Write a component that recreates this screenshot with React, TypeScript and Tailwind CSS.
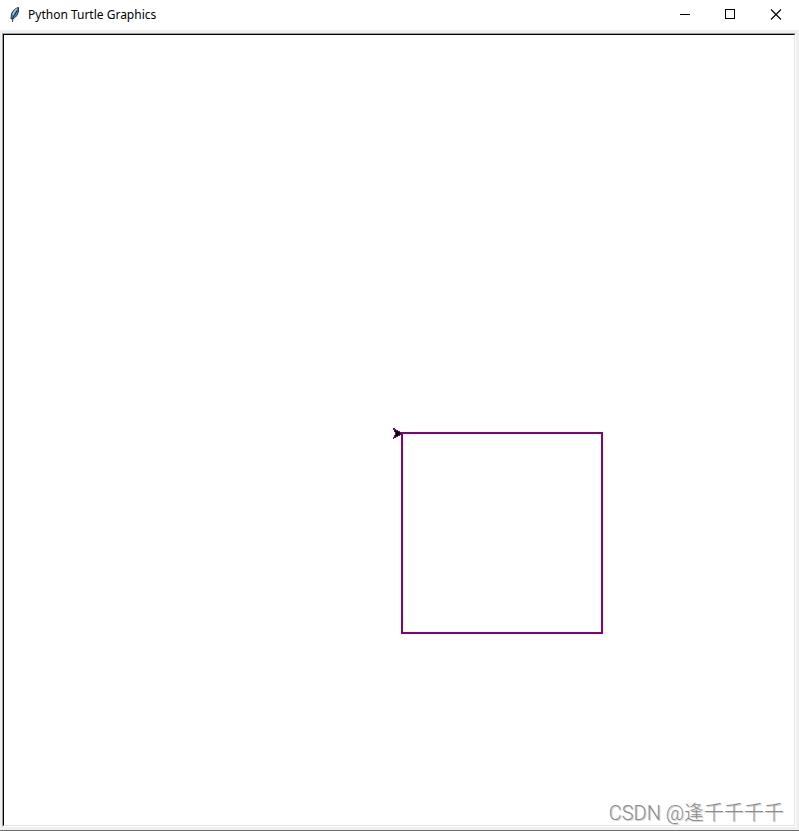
import React from "react";

const TitleBar = () => {
  return (
    <header className="flex h-[30px] items-center bg-white pl-2">
      <svg width="14" height="16" viewBox="0 0 14 16" aria-hidden="true">
        <path
          d="M10.5 0.5 C7.5 1 4.5 4 3.5 7 L3 12 L5.5 11.5 C8.5 10 10 7 10.5 4 Z"
          fill="#4a86cc"
          stroke="#25252b"
          strokeWidth="0.9"
        />
        <path d="M9 1.8 C7.2 3 5.6 5.2 5 8" stroke="#9cc8f5" strokeWidth="1.4" fill="none" />
        <path d="M9.5 3 L5 10.5 L4.5 15" stroke="#1c1c1c" strokeWidth="0.9" fill="none" />
      </svg>
      <h1 className="ml-1.5 flex-1 font-['Noto_Sans',sans-serif] text-[12px] leading-4 text-black">
        Python Turtle Graphics
      </h1>
      <div className="flex h-full">
        <button aria-label="Minimize" className="flex w-[45px] items-center justify-center">
          <svg width="12" height="12" viewBox="0 0 12 12" shapeRendering="crispEdges">
            <path d="M1 5.5 H11" stroke="#000" />
          </svg>
        </button>
        <button aria-label="Maximize" className="flex w-[45px] items-center justify-center">
          <svg width="12" height="12" viewBox="0 0 12 12" shapeRendering="crispEdges">
            <rect x="1.5" y="0.5" width="9" height="9" fill="none" stroke="#000" />
          </svg>
        </button>
        <button aria-label="Close" className="ml-px flex w-[46px] items-center justify-center">
          <svg width="12" height="12" viewBox="0 0 12 12">
            <path d="M1 0.5 L11 10.5 M11 0.5 L1 10.5" stroke="#000" strokeWidth="1.1" />
          </svg>
        </button>
      </div>
    </header>
  );
};

const App = () => {
  return (
    <div className="flex min-h-screen flex-col border-b border-[#6d6d6d] bg-[#f0f0f0]">
      <TitleBar />
      {/* sunken frame */}
      <main className="mt-[3px] mr-[3px] mb-[3px] ml-[2px] flex flex-1 border border-t-[#a0a0a0] border-r-white border-b-white border-l-[#a0a0a0]">
        <div className="relative flex flex-1 items-center justify-center border border-t-black border-r-[#e3e3e3] border-b-[#e3e3e3] border-l-black bg-white">
          <svg
            width="420"
            height="421"
            viewBox="0 0 420 421"
            shapeRendering="crispEdges"
            role="img"
            aria-label="Purple square"
          >
            <rect x="213" y="213" width="200" height="200" fill="none" stroke="#800080" strokeWidth="2" />
            <path
              d="M213.5 213.5 L204.5 208.5 L206.5 213.5 L204.5 218.5 Z"
              fill="#000"
              stroke="#800080"
              strokeWidth="1"
            />
            <path d="M208 211 L212 213 V214 L208 216 Z" fill="#000" />
          </svg>
          <div className="absolute right-[10px] bottom-0 font-['Roboto','Noto_Sans_CJK_SC',sans-serif] text-[20px] leading-6 font-light whitespace-nowrap text-[#8c8c8c] [text-shadow:1px_1px_0_#d4d4d4]">
            CSDN @逢千千千千
          </div>
        </div>
      </main>
    </div>
  );
};

export default App;
